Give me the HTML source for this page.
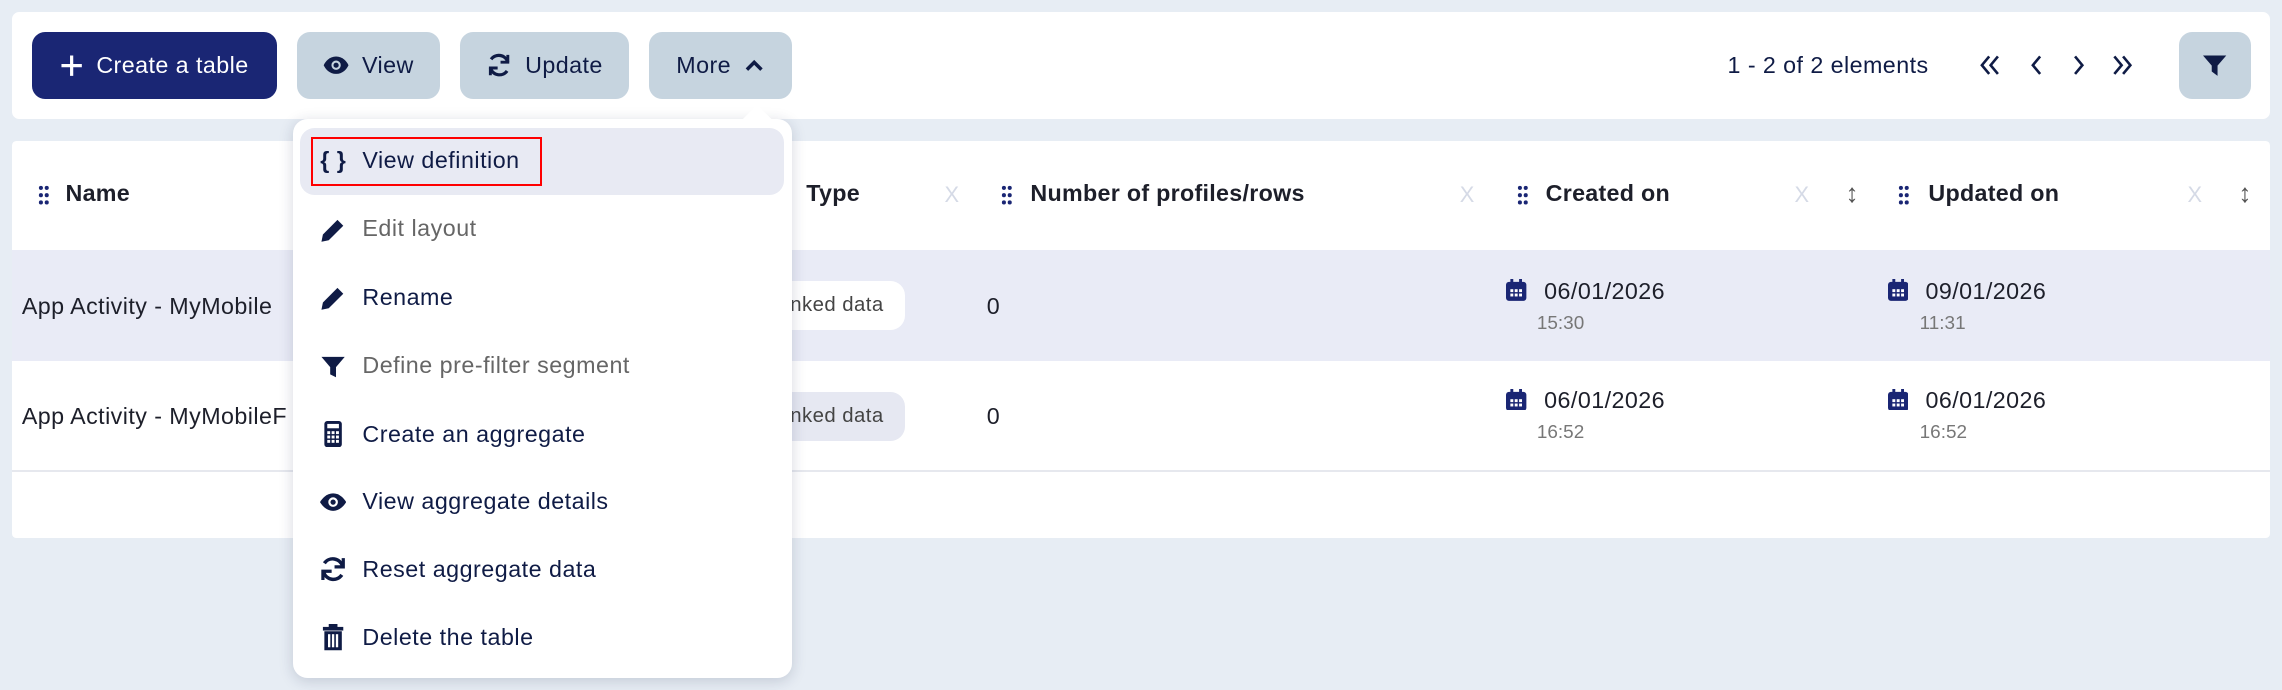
<!DOCTYPE html>
<html><head><meta charset="utf-8"><style>
html,body{margin:0;padding:0;width:2282px;height:690px;overflow:hidden;background:#e7edf4;}
#w{position:relative;width:1568px;height:474px;zoom:1.4554;font-family:"Liberation Sans",sans-serif;color:#0f1b45;}
.a{position:absolute;}
.panel{background:#fff;border-radius:5px;}
.btn{position:absolute;top:22px;height:46px;border-radius:9px;background:#c6d4df;font-size:16px;display:flex;align-items:center;justify-content:center;gap:9px;color:#0f1b45;letter-spacing:.3px;}
.hd{position:absolute;top:124px;font-size:16px;font-weight:bold;color:#1d1f2a;letter-spacing:.2px;}
.drag{position:absolute;top:127px;width:8px;height:14px;}
.x{position:absolute;top:125px;color:#d5dae6;font-size:15px;}
.ud{position:absolute;top:122px;color:#555;font-size:18px;}
.cell{position:absolute;font-size:16px;color:#1d1f2a;letter-spacing:.3px;}
.time{position:absolute;font-size:13px;color:#777;}
.mi{position:absolute;left:249px;font-size:16px;color:#0f1b45;letter-spacing:.35px;}
.ic{position:absolute;left:220px;width:18px;height:18px;}
</style></head><body><div id="w">
<div class="a panel" style="left:8px;top:8px;width:1552px;height:74px"></div>
<div class="btn" style="left:22px;width:168px;background:#1a2674;color:#fff"><svg width="16" height="16" viewBox="0 0 16 16"><path d="M8 1v14M1 8h14" stroke="#fff" stroke-width="2.2"/></svg>Create a table</div>
<div class="btn" style="left:204px;width:98px"><svg width="18" height="14" viewBox="0 0 18 14"><path d="M9 1C4.5 1 1.5 4.5 0.5 7c1 2.5 4 6 8.5 6s7.5-3.5 8.5-6C16.5 4.5 13.5 1 9 1z" fill="#0f1b45"/><circle cx="9" cy="7" r="3.2" fill="#c6d4df"/><circle cx="9" cy="7" r="1.8" fill="#0f1b45"/></svg>View</div>
<div class="btn" style="left:316px;width:116px"><svg width="18" height="18" viewBox="0 0 18 18" fill="none" stroke="#0f1b45" stroke-width="2.2"><path d="M15 7A6.5 6.5 0 0 0 3.5 5"/><path d="M3 11a6.5 6.5 0 0 0 11.5 2"/><path d="M15 2v5h-5M3 16v-5h5" stroke-width="2"/></svg>Update</div>
<div class="btn" style="left:446px;width:98px">More <svg width="14" height="10" viewBox="0 0 14 10"><path d="M2 8l5-5 5 5" fill="none" stroke="#0f1b45" stroke-width="2.4"/></svg></div>
<div class="a" style="left:1187px;top:36px;font-size:16px;letter-spacing:.3px">1 - 2 of 2 elements</div>
<svg class="a" style="left:1360px;top:38px" width="106" height="14" viewBox="0 0 106 14" fill="none" stroke="#0f1b45" stroke-width="1.8"><path d="M7 1L2 7l5 6M13 1L8 7l5 6M42 1l-5 6 5 6M66 1l5 6-5 6M93 1l5 6-5 6M99 1l5 6-5 6"/></svg>
<div class="btn" style="left:1497px;width:50px"><svg width="16" height="16" viewBox="0 0 16 16"><path d="M0 1h16l-6 7v7l-4-3V8z" fill="#0f1b45"/></svg></div>

<div class="a panel" style="left:8px;top:97px;width:1552px;height:273px;border-radius:3px"></div>
<div class="a" style="left:8px;top:172px;width:1552px;height:76px;background:#e9ebf6"></div>
<div class="a" style="left:8px;top:323px;width:1552px;height:1px;background:#e6e8ee"></div>
<svg class="drag" style="left:26px" viewBox="0 0 8 14" fill="#1a2674"><circle cx="2" cy="2" r="1.4"/><circle cx="6" cy="2" r="1.4"/><circle cx="2" cy="7" r="1.4"/><circle cx="6" cy="7" r="1.4"/><circle cx="2" cy="12" r="1.4"/><circle cx="6" cy="12" r="1.4"/></svg>
<div class="hd" style="left:45px">Name</div>
<div class="hd" style="left:554px">Type</div><div class="x" style="left:649px">X</div>
<svg class="drag" style="left:688px" viewBox="0 0 8 14" fill="#1a2674"><circle cx="2" cy="2" r="1.4"/><circle cx="6" cy="2" r="1.4"/><circle cx="2" cy="7" r="1.4"/><circle cx="6" cy="7" r="1.4"/><circle cx="2" cy="12" r="1.4"/><circle cx="6" cy="12" r="1.4"/></svg>
<div class="hd" style="left:708px">Number of profiles/rows</div><div class="x" style="left:1003px">X</div>
<svg class="drag" style="left:1042px" viewBox="0 0 8 14" fill="#1a2674"><circle cx="2" cy="2" r="1.4"/><circle cx="6" cy="2" r="1.4"/><circle cx="2" cy="7" r="1.4"/><circle cx="6" cy="7" r="1.4"/><circle cx="2" cy="12" r="1.4"/><circle cx="6" cy="12" r="1.4"/></svg>
<div class="hd" style="left:1062px">Created on</div><div class="x" style="left:1233px">X</div><div class="ud" style="left:1268px">↕</div>
<svg class="drag" style="left:1304px" viewBox="0 0 8 14" fill="#1a2674"><circle cx="2" cy="2" r="1.4"/><circle cx="6" cy="2" r="1.4"/><circle cx="2" cy="7" r="1.4"/><circle cx="6" cy="7" r="1.4"/><circle cx="2" cy="12" r="1.4"/><circle cx="6" cy="12" r="1.4"/></svg>
<div class="hd" style="left:1325px">Updated on</div><div class="x" style="left:1503px">X</div><div class="ud" style="left:1538px">↕</div>

<div class="cell" style="left:15px;top:201px">App Activity - MyMobile</div>
<div class="cell" style="left:15px;top:277px">App Activity - MyMobileF</div>
<div class="a" style="left:500px;top:193px;width:122px;height:34px;background:#fff;border-radius:10px"></div>
<div class="a" style="left:500px;top:269px;width:122px;height:34px;background:#e6e8f2;border-radius:10px"></div>
<div class="cell" style="left:543px;top:202px;font-size:14px;color:#444">nked data</div>
<div class="cell" style="left:543px;top:278px;font-size:14px;color:#444">nked data</div>
<div class="cell" style="left:678px;top:201px">0</div>
<div class="cell" style="left:678px;top:277px">0</div>
<svg class="a" style="left:1035px;top:192px" width="14" height="15" viewBox="0 0 14 15"><rect x="0" y="2" width="14" height="13" rx="2" fill="#1a2674"/><rect x="3" y="0" width="2" height="4" fill="#1a2674"/><rect x="9" y="0" width="2" height="4" fill="#1a2674"/><g fill="#fff"><rect x="3" y="7" width="2" height="2"/><rect x="6" y="7" width="2" height="2"/><rect x="9" y="7" width="2" height="2"/><rect x="3" y="10" width="2" height="2"/><rect x="6" y="10" width="2" height="2"/><rect x="9" y="10" width="2" height="2"/></g></svg>
<svg class="a" style="left:1035px;top:267px" width="14" height="15" viewBox="0 0 14 15"><rect x="0" y="2" width="14" height="13" rx="2" fill="#1a2674"/><rect x="3" y="0" width="2" height="4" fill="#1a2674"/><rect x="9" y="0" width="2" height="4" fill="#1a2674"/><g fill="#fff"><rect x="3" y="7" width="2" height="2"/><rect x="6" y="7" width="2" height="2"/><rect x="9" y="7" width="2" height="2"/><rect x="3" y="10" width="2" height="2"/><rect x="6" y="10" width="2" height="2"/><rect x="9" y="10" width="2" height="2"/></g></svg>
<svg class="a" style="left:1297px;top:192px" width="14" height="15" viewBox="0 0 14 15"><rect x="0" y="2" width="14" height="13" rx="2" fill="#1a2674"/><rect x="3" y="0" width="2" height="4" fill="#1a2674"/><rect x="9" y="0" width="2" height="4" fill="#1a2674"/><g fill="#fff"><rect x="3" y="7" width="2" height="2"/><rect x="6" y="7" width="2" height="2"/><rect x="9" y="7" width="2" height="2"/><rect x="3" y="10" width="2" height="2"/><rect x="6" y="10" width="2" height="2"/><rect x="9" y="10" width="2" height="2"/></g></svg>
<svg class="a" style="left:1297px;top:267px" width="14" height="15" viewBox="0 0 14 15"><rect x="0" y="2" width="14" height="13" rx="2" fill="#1a2674"/><rect x="3" y="0" width="2" height="4" fill="#1a2674"/><rect x="9" y="0" width="2" height="4" fill="#1a2674"/><g fill="#fff"><rect x="3" y="7" width="2" height="2"/><rect x="6" y="7" width="2" height="2"/><rect x="9" y="7" width="2" height="2"/><rect x="3" y="10" width="2" height="2"/><rect x="6" y="10" width="2" height="2"/><rect x="9" y="10" width="2" height="2"/></g></svg>
<div class="cell" style="left:1061px;top:191px">06/01/2026</div><div class="time" style="left:1056px;top:215px">15:30</div>
<div class="cell" style="left:1323px;top:191px">09/01/2026</div><div class="time" style="left:1319px;top:215px">11:31</div>
<div class="cell" style="left:1061px;top:266px">06/01/2026</div><div class="time" style="left:1056px;top:290px">16:52</div>
<div class="cell" style="left:1323px;top:266px">06/01/2026</div><div class="time" style="left:1319px;top:290px">16:52</div>

<div class="a" style="left:201px;top:82px;width:343px;height:384px;background:#fff;border-radius:10px;box-shadow:0 2px 10px rgba(30,40,80,.18)"></div>
<div class="a" style="left:513px;top:75px;width:14px;height:14px;background:#fff;transform:rotate(45deg)"></div>
<div class="a" style="left:206px;top:88px;width:333px;height:46px;background:#e8eaf3;border-radius:10px"></div>
<div class="a" style="left:214px;top:94px;width:156px;height:31px;border:2px solid #f00"></div>
<div class="mi" style="left:220px;top:101px;font-weight:bold">{ }</div>
<div class="mi" style="top:101px">View definition</div>
<svg class="ic" style="top:149px" viewBox="0 0 18 18"><path d="M1 17l1-5 10-10 4 4-10 10z" fill="#0f1b45"/></svg>
<div class="mi" style="top:148px;color:#666">Edit layout</div>
<svg class="ic" style="top:196px" viewBox="0 0 18 18"><path d="M1 17l1-5 10-10 4 4-10 10z" fill="#0f1b45"/></svg>
<div class="mi" style="top:195px">Rename</div>
<svg class="ic" style="top:243px" viewBox="0 0 18 18"><path d="M1 2h16l-6 7v7l-4-2V9z" fill="#0f1b45"/></svg>
<div class="mi" style="top:242px;color:#666">Define pre-filter segment</div>
<svg class="ic" style="top:289px" viewBox="0 0 18 18"><rect x="3" y="0" width="12" height="18" rx="2" fill="#0f1b45"/><rect x="5" y="2" width="8" height="3" fill="#fff"/><g fill="#fff"><rect x="5" y="7" width="2" height="2"/><rect x="8" y="7" width="2" height="2"/><rect x="11" y="7" width="2" height="2"/><rect x="5" y="10" width="2" height="2"/><rect x="8" y="10" width="2" height="2"/><rect x="11" y="10" width="2" height="2"/><rect x="5" y="13" width="2" height="2"/><rect x="8" y="13" width="2" height="2"/><rect x="11" y="13" width="2" height="2"/></g></svg>
<div class="mi" style="top:289px">Create an aggregate</div>
<svg class="ic" style="top:336px" viewBox="0 0 18 18"><path d="M9 3C4.5 3 1.5 6.5 0 9c1.5 2.5 4.5 6 9 6s7.5-3.5 9-6C16.5 6.5 13.5 3 9 3z" fill="#0f1b45"/><circle cx="9" cy="9" r="3.3" fill="#fff"/><circle cx="9" cy="9" r="1.8" fill="#0f1b45"/></svg>
<div class="mi" style="top:335px">View aggregate details</div>
<svg class="ic" style="top:382px" viewBox="0 0 18 18" fill="none" stroke="#0f1b45" stroke-width="2.4"><path d="M15.5 7A7 7 0 0 0 3 5"/><path d="M2.5 11a7 7 0 0 0 12.5 2"/><path d="M16 1.5v6h-6M2 16.5v-6h6" stroke-width="2.2"/></svg>
<div class="mi" style="top:382px">Reset aggregate data</div>
<svg class="ic" style="top:429px" viewBox="0 0 18 18"><rect x="2" y="2" width="14" height="2.5" fill="#0f1b45"/><rect x="6" y="0" width="6" height="2.5" fill="#0f1b45"/><path d="M3 5h12v13H3z" fill="#0f1b45"/><g fill="#fff"><rect x="5.5" y="7" width="1.6" height="9"/><rect x="8.2" y="7" width="1.6" height="9"/><rect x="10.9" y="7" width="1.6" height="9"/></g></svg>
<div class="mi" style="top:429px">Delete the table</div>
</div></body></html>
